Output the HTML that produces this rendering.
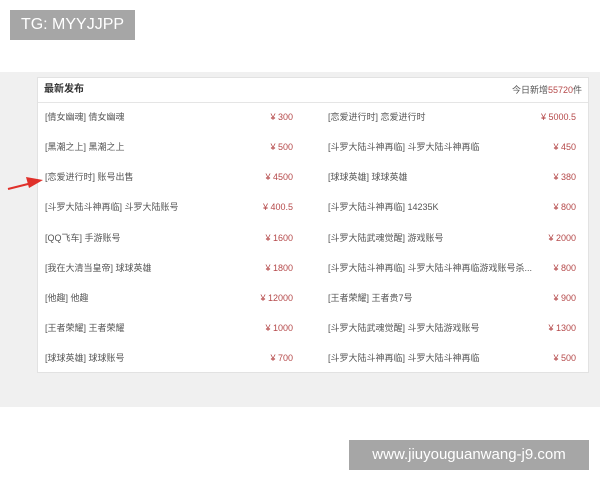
<!DOCTYPE html>
<html><head><meta charset="utf-8"><style>
body{margin:0;width:600px;height:480px;background:#fff;position:relative;overflow:hidden;font-family:"Liberation Sans","Noto Sans CJK SC",sans-serif}
.tg{position:absolute;left:10px;top:10px;width:125px;height:30px;background:#a6a6a6;color:#fff;font-size:16px;line-height:30px;text-align:center}
.band{position:absolute;left:0;top:72px;width:600px;height:335px;background:#f0f0f0}
.panel{position:absolute;left:37px;top:77px;width:550px;height:294px;background:#fff;border:1px solid #e2e2e2}
.hd{height:24px;border-bottom:1px solid #e5e5e5;font-size:10px;line-height:24px;padding:0 6px;color:#333}
.hd b{font-weight:bold}
.hd span{float:right;color:#555;font-size:9px}
.hd span i{font-style:normal;color:#b5494a}
.row{position:absolute;font-size:9px;color:#555;height:14px;line-height:14px}
.p{position:absolute;font-size:9px;color:#b5494a;text-align:right;width:80px;height:14px;line-height:14px}
.url{position:absolute;left:349px;top:440px;width:240px;height:30px;background:#a6a6a6;color:#fff;font-size:15px;line-height:30px;text-align:center}
</style></head><body>
<div class="tg">TG: MYYJJPP</div>
<div class="band"></div>
<div class="panel"><div class="hd"><b>最新发布</b><span>今日新增<i>55720</i>件</span></div></div>
<div class="row" style="left:45px;top:110px">[倩女幽魂] 倩女幽魂</div><div class="p" style="left:213px;top:110px">¥ 300</div>
<div class="row" style="left:328px;top:110px">[恋爱进行时] 恋爱进行时</div><div class="p" style="left:496px;top:110px">¥ 5000.5</div>
<div class="row" style="left:45px;top:140px">[黑潮之上] 黑潮之上</div><div class="p" style="left:213px;top:140px">¥ 500</div>
<div class="row" style="left:328px;top:140px">[斗罗大陆斗神再临] 斗罗大陆斗神再临</div><div class="p" style="left:496px;top:140px">¥ 450</div>
<div class="row" style="left:45px;top:170px">[恋爱进行时] 账号出售</div><div class="p" style="left:213px;top:170px">¥ 4500</div>
<div class="row" style="left:328px;top:170px">[球球英雄] 球球英雄</div><div class="p" style="left:496px;top:170px">¥ 380</div>
<div class="row" style="left:45px;top:200px">[斗罗大陆斗神再临] 斗罗大陆账号</div><div class="p" style="left:213px;top:200px">¥ 400.5</div>
<div class="row" style="left:328px;top:200px">[斗罗大陆斗神再临] 14235K</div><div class="p" style="left:496px;top:200px">¥ 800</div>
<div class="row" style="left:45px;top:231px">[QQ飞车] 手游账号</div><div class="p" style="left:213px;top:231px">¥ 1600</div>
<div class="row" style="left:328px;top:231px">[斗罗大陆武魂觉醒] 游戏账号</div><div class="p" style="left:496px;top:231px">¥ 2000</div>
<div class="row" style="left:45px;top:261px">[我在大清当皇帝] 球球英雄</div><div class="p" style="left:213px;top:261px">¥ 1800</div>
<div class="row" style="left:328px;top:261px">[斗罗大陆斗神再临] 斗罗大陆斗神再临游戏账号杀...</div><div class="p" style="left:496px;top:261px">¥ 800</div>
<div class="row" style="left:45px;top:291px">[他趣] 他趣</div><div class="p" style="left:213px;top:291px">¥ 12000</div>
<div class="row" style="left:328px;top:291px">[王者荣耀] 王者贵7号</div><div class="p" style="left:496px;top:291px">¥ 900</div>
<div class="row" style="left:45px;top:321px">[王者荣耀] 王者荣耀</div><div class="p" style="left:213px;top:321px">¥ 1000</div>
<div class="row" style="left:328px;top:321px">[斗罗大陆武魂觉醒] 斗罗大陆游戏账号</div><div class="p" style="left:496px;top:321px">¥ 1300</div>
<div class="row" style="left:45px;top:351px">[球球英雄] 球球账号</div><div class="p" style="left:213px;top:351px">¥ 700</div>
<div class="row" style="left:328px;top:351px">[斗罗大陆斗神再临] 斗罗大陆斗神再临</div><div class="p" style="left:496px;top:351px">¥ 500</div>
<svg style="position:absolute;left:0;top:0" width="600" height="480"><path d="M8 189 L32 183" stroke="#e0302a" stroke-width="2"/><path d="M26 177 L43 180 L29 188 Z" fill="#e0302a"/></svg>
<div class="url">www.jiuyouguanwang-j9.com</div>
</body></html>
